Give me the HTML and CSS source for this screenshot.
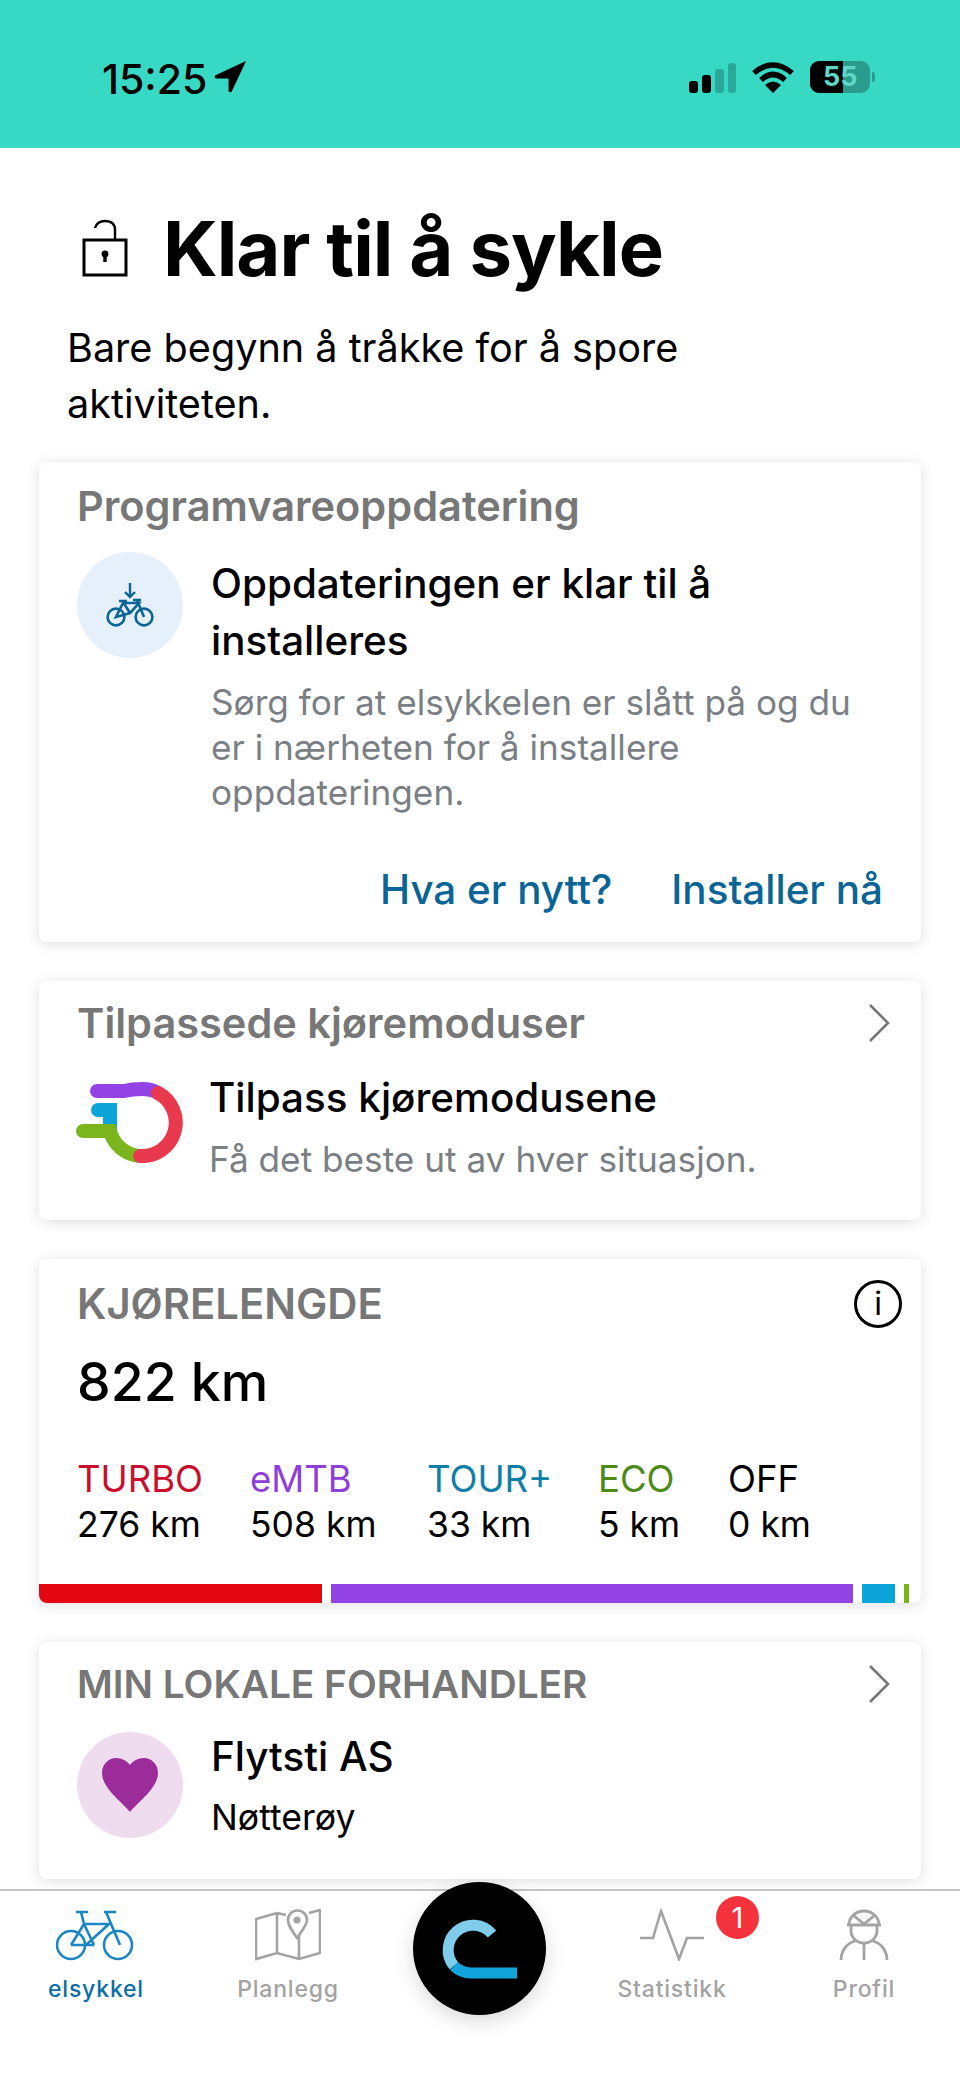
FILE: index.html
```html
<!DOCTYPE html>
<html lang="en">
<head>
  <meta charset="UTF-8">
  <meta name="viewport" content="width=device-width, initial-scale=1.0">
  <title>Klar til å sykle</title>
  <link rel="stylesheet" href="styles.css">
</head>
<body>
  <div class="app">
    <!-- Status bar -->
    <header class="status-bar">
      <div class="status-left">
        <span class="clock">15:25</span>
        <svg class="loc-arrow" viewBox="0 0 34 34"><path d="M33 1 L1 16 Q0 18 2 19 L15 19 L15 32 Q16 34 18 33 Z" fill="#000"/></svg>
      </div>
      <div class="status-right">
        <svg class="signal" viewBox="0 0 47 30">
          <rect x="0" y="18" width="9" height="12" rx="3" fill="#000"/>
          <rect x="13" y="12" width="9" height="18" rx="3" fill="#000"/>
          <rect x="26" y="6" width="9" height="24" rx="3" fill="#000" opacity=".22"/>
          <rect x="39" y="0" width="8" height="30" rx="3" fill="#000" opacity=".22"/>
        </svg>
        <svg class="wifi" viewBox="0 0 42 31">
          <path d="M2 11 Q21 -5 40 11" fill="none" stroke="#000" stroke-width="5.5"/>
          <path d="M9 18 Q21 7 33 18" fill="none" stroke="#000" stroke-width="5.5"/>
          <path d="M13 23 Q21 16 29 23 L21 31 Z" fill="#000"/>
        </svg>
        <div class="battery">
          <div class="battery-body">
            <span class="battery-level"></span>
            <span class="battery-num">55</span>
          </div>
          <span class="battery-nub"></span>
        </div>
      </div>
    </header>

    <main class="content">
      <div class="title-row">
        <svg class="lock" viewBox="0 0 46 58">
          <path d="M33 21 V11 Q33 2 23 2 Q15 2 13 9" fill="none" stroke="#000" stroke-width="2.4"/>
          <rect x="2" y="21" width="42" height="35" fill="none" stroke="#000" stroke-width="3"/>
          <circle cx="23" cy="35" r="3.4" fill="#000"/>
          <rect x="21.3" y="35" width="3.4" height="8" fill="#000"/>
        </svg>
        <h1>Klar til å sykle</h1>
      </div>
      <p class="intro">Bare begynn å tråkke for å spore aktiviteten.</p>

      <!-- Software update -->
      <section class="card card-update">
        <h2 class="card-label">Programvareoppdatering</h2>
        <div class="media">
          <div class="round round-blue">
            <svg class="bike-small" viewBox="0 0 48 46">
              <path d="M24 1 V14 M19 10 L24 15 L29 10" fill="none" stroke="#0a6496" stroke-width="2.4"/>
              <circle cx="10" cy="35" r="8.4" fill="none" stroke="#0a6496" stroke-width="2.6"/>
              <circle cx="38" cy="35" r="8.4" fill="none" stroke="#0a6496" stroke-width="2.6"/>
              <path d="M10 35 L24 31 L33 21 L17 21 Z M38 35 L31 18 M13 19 H21 M27 18 H35 M17 20 L24 31" fill="none" stroke="#0a6496" stroke-width="2.6"/>
            </svg>
          </div>
          <div class="media-text update-text">
            <h3 class="media-title">Oppdateringen er klar til å installeres</h3>
            <p class="media-desc">Sørg for at elsykkelen er slått på og du er i nærheten for å installere oppdateringen.</p>
          </div>
        </div>
        <div class="actions">
          <a class="link">Hva er nytt?</a>
          <a class="link">Installer nå</a>
        </div>
      </section>

      <!-- Custom modes -->
      <section class="card card-modes">
        <div class="card-head">
          <h2 class="card-label">Tilpassede kjøremoduser</h2>
          <svg class="chevron" viewBox="0 0 22 40"><path d="M2 2 L20 20 L2 38" fill="none" stroke="#777" stroke-width="2.6"/></svg>
        </div>
        <div class="media media-center">
          <svg class="modes-logo" viewBox="0 0 110 84">
            <path d="M24 31 H36 V52" fill="none" stroke="#0ca5d9" stroke-width="14" stroke-linecap="round"/>
            <path d="M9 52 H36 A33.5 33.5 0 0 0 66 77" fill="none" stroke="#7ab51d" stroke-width="14" stroke-linecap="round"/>
            <path d="M23 12 H50 Q58 10 68 10 Q78 10 84 14" fill="none" stroke="#9342e6" stroke-width="14" stroke-linecap="round"/>
            <path d="M84 14 A33.5 33.5 0 0 1 66 77" fill="none" stroke="#e8394f" stroke-width="14" stroke-linecap="round"/>
          </svg>
          <div class="media-text">
            <h3 class="media-title">Tilpass kjøremodusene</h3>
            <p class="media-desc">Få det beste ut av hver situasjon.</p>
          </div>
        </div>
      </section>

      <!-- Distance -->
      <section class="card card-range">
        <div class="card-head">
          <h2 class="card-label label-range">KJØRELENGDE</h2>
          <span class="info">i</span>
        </div>
        <div class="total">822 km</div>
        <div class="modes">
          <div class="mode mode-turbo"><span class="mode-name">TURBO</span><span>276 km</span></div>
          <div class="mode mode-emtb"><span class="mode-name">eMTB</span><span>508 km</span></div>
          <div class="mode mode-tour"><span class="mode-name">TOUR+</span><span>33 km</span></div>
          <div class="mode mode-eco"><span class="mode-name">ECO</span><span>5 km</span></div>
          <div class="mode mode-off"><span class="mode-name">OFF</span><span>0 km</span></div>
        </div>
        <div class="bar">
          <span class="bar-turbo"></span>
          <span class="bar-emtb"></span>
          <span class="bar-tour"></span>
          <span class="bar-eco"></span>
        </div>
      </section>

      <!-- Dealer -->
      <section class="card card-dealer">
        <div class="card-head">
          <h2 class="card-label label-dealer">MIN LOKALE FORHANDLER</h2>
          <svg class="chevron" viewBox="0 0 22 40"><path d="M2 2 L20 20 L2 38" fill="none" stroke="#777" stroke-width="2.6"/></svg>
        </div>
        <div class="media media-dealer">
          <div class="round round-pink">
            <svg class="heart" viewBox="0 0 56 54"><path d="M28 54 C20 44 0 30 0 15 C0 6 7 0 14 0 C20 0 25 3 28 7 C31 3 36 0 42 0 C49 0 56 6 56 15 C56 30 36 44 28 54 Z" fill="#9b2c99"/></svg>
          </div>
          <div class="media-text">
            <h3 class="media-title">Flytsti AS</h3>
            <p class="dealer-place">Nøtterøy</p>
          </div>
        </div>
      </section>
    </main>

    <!-- Tab bar -->
    <nav class="tabs">
      <div class="tab tab-active">
        <svg class="tab-icon" viewBox="0 0 80 52">
          <circle cx="15" cy="36" r="14" fill="none" stroke="#1a86c4" stroke-width="2.6"/>
          <circle cx="62" cy="36" r="14" fill="none" stroke="#1a86c4" stroke-width="2.6"/>
          <path d="M15 36 H30 L53 15 H28 L15 36 M28 15 L38 36 M28 15 L25 3 M20 3 H32 M48 3 H60 M50 3 L64 36 M30 36 L38 36" fill="none" stroke="#1a86c4" stroke-width="2.6"/>
        </svg>
        <span class="tab-label">elsykkel</span>
      </div>
      <div class="tab">
        <svg class="tab-icon" viewBox="0 0 66 52">
          <path d="M22 4 L1 10 V50 L22 44 L44 50 L65 44 V1 L54 4 M22 4 L31 6 M22 4 V44 M44 26 V50" fill="none" stroke="#a3a3a3" stroke-width="2.6"/>
          <path d="M42 29 C36 20 33 16 33 11 A9.5 9.5 0 0 1 52 11 C52 16 48 20 42 29 Z" fill="none" stroke="#a3a3a3" stroke-width="2.6"/>
          <circle cx="42" cy="11" r="3.5" fill="#a3a3a3"/>
        </svg>
        <span class="tab-label">Planlegg</span>
      </div>
      <div class="tab tab-middle">
        <div class="center-btn">
          <svg viewBox="0 0 133 133">
            <path d="M79 52 A24.5 24.5 0 1 0 41 84" fill="none" stroke="#7fcdeb" stroke-width="11"/>
            <path d="M41 84 A24.5 24.5 0 0 0 58 91 H104" fill="none" stroke="#12a5dc" stroke-width="11"/>
          </svg>
        </div>
      </div>
      <div class="tab tab-stats">
        <svg class="tab-icon" viewBox="0 0 66 52">
          <path d="M1 29 H14 L22 2 L40 50 L48 29 H65" fill="none" stroke="#a3a3a3" stroke-width="2.6"/>
        </svg>
        <span class="tab-label">Statistikk</span>
        <span class="badge">1</span>
      </div>
      <div class="tab">
        <svg class="tab-icon" viewBox="0 0 50 52">
          <path d="M10 16 A15 14 0 0 1 40 16 M8 16 H42 M14 6 L25 15 L36 6 M12 16 V22 A13 12 0 0 0 38 22 V16" fill="none" stroke="#a3a3a3" stroke-width="2.8"/>
          <path d="M2 51 C2 42 8 34 16 32 M48 51 C48 42 42 34 34 32 M25 34 V51" fill="none" stroke="#a3a3a3" stroke-width="2.8"/>
        </svg>
        <span class="tab-label">Profil</span>
      </div>
    </nav>
  </div>
</body>
</html>
```

FILE: styles.css
```css
* {
  box-sizing: border-box;
}
body {
  margin: 0;
  font-family: Inter, "Liberation Sans", sans-serif;
  background-color: #fff;
  color: #000;
}
h1, h2, h3, p {
  margin: 0;
  font-weight: normal;
}
.app {
  width: 960px;
  height: 2087px;
  display: flex;
  flex-direction: column;
  overflow: hidden;
}

/* Status bar */
.status-bar {
  height: 148px;
  flex: none;
  background-color: #37d8c4;
  display: flex;
  justify-content: space-between;
  padding: 60px 85px 0 102px;
}
.status-left {
  display: flex;
  align-items: flex-start;
  gap: 7px;
}
.clock {
  font-size: 41px;
  line-height: 38px;
  font-weight: 500;
}
.loc-arrow {
  width: 33px;
  height: 33px;
}
.status-right {
  display: flex;
  align-items: flex-start;
  gap: 16px;
}
.signal {
  width: 47px;
  height: 30px;
  margin-top: 3px;
}
.wifi {
  width: 42px;
  height: 31px;
  margin-top: 2px;
}
.battery {
  display: flex;
  align-items: center;
  gap: 2px;
  margin-top: 1px;
}
.battery-body {
  position: relative;
  width: 60px;
  height: 32px;
  border-radius: 9px;
  background-color: #2a9c8e;
  overflow: hidden;
}
.battery-level {
  display: block;
  width: 33px;
  height: 100%;
  background-color: #000;
}
.battery-num {
  position: absolute;
  top: 0;
  left: 13px;
  font-size: 27px;
  line-height: 32px;
  font-weight: 700;
  color: #5fd8c8;
}
.battery-nub {
  width: 3px;
  height: 10px;
  border-radius: 0 3px 3px 0;
  background-color: #2a9c8e;
}

/* Heading */
.content {
  flex: 1;
  min-height: 0;
  padding: 0 39px;
  overflow: hidden;
}
.title-row {
  display: flex;
  align-items: center;
  gap: 35px;
  margin: 62px 0 0 43px;
  height: 76px;
}
.lock {
  width: 46px;
  height: 58px;
  flex: none;
}
h1 {
  font-size: 76px;
  line-height: 76px;
  font-weight: 700;
  letter-spacing: -1px;
}
.intro {
  margin: 34px 0 0 28px;
  width: 680px;
  font-size: 39.6px;
  line-height: 56px;
}

/* Cards */
.card {
  background-color: #fff;
  border-radius: 8px;
  box-shadow: 0 2px 14px rgba(0, 0, 0, 0.13);
  padding: 0 38px;
  margin-bottom: 39px;
}
.card-update {
  height: 480px;
  margin-top: 30px;
  padding-top: 18px;
}
.card-modes {
  height: 239px;
  padding-top: 16px;
}
.card-range {
  height: 344px;
  padding-top: 19px;
  position: relative;
  overflow: hidden;
}
.card-dealer {
  height: 237px;
  padding-top: 16px;
}
.card-label {
  font-size: 41.5px;
  line-height: 52px;
  font-weight: 600;
  color: #777;
}
.label-range {
  font-size: 41.8px;
}
.label-dealer {
  font-size: 38.8px;
}
.card-head {
  display: flex;
  justify-content: space-between;
  align-items: center;
}
.chevron {
  width: 22px;
  height: 40px;
  margin-right: -7px;
}
.media {
  display: flex;
  gap: 29px;
  margin-top: 20px;
}
.media-center {
  margin-top: 20px;
  align-items: flex-start;
  gap: 29px;
}
.media-dealer {
  margin-top: 22px;
}
.round {
  width: 106px;
  height: 106px;
  border-radius: 50%;
  flex: none;
  display: flex;
  align-items: center;
  justify-content: center;
}
.round-blue {
  background-color: #e6f0fb;
}
.round-pink {
  background-color: #f0dcef;
}
.media-text {
  margin-left: -1px;
}
.update-text {
  padding-top: 3px;
}
.bike-small {
  width: 48px;
  height: 46px;
}
.heart {
  width: 56px;
  height: 54px;
}
.modes-logo {
  width: 110px;
  height: 84px;
  flex: none;
  margin: 10px -3px 0 -3px;
}
.media-title {
  font-size: 40.4px;
  line-height: 57px;
  font-weight: 500;
}
.media-desc {
  font-size: 35.2px;
  line-height: 45px;
  color: #7a7f85;
  margin-top: 11px;
}
.card-dealer .media-title {
  margin-top: -4px;
}
.dealer-place {
  font-size: 35.6px;
  line-height: 45px;
  margin-top: 10px;
}
.actions {
  display: flex;
  justify-content: flex-end;
  gap: 59px;
  margin-top: 49px;
}
.link {
  font-size: 40.4px;
  line-height: 52px;
  font-weight: 500;
  color: #0a6496;
}

/* Distance card */
.info {
  width: 48px;
  height: 48px;
  border: 3px solid #000;
  border-radius: 50%;
  margin-right: -19px;
  font-size: 32px;
  line-height: 42px;
  text-align: center;
}
.total {
  font-size: 53.5px;
  line-height: 64px;
  font-weight: 500;
  margin-top: 20px;
}
.modes {
  display: flex;
  margin-top: 43px;
  font-size: 35.5px;
  line-height: 45px;
}
.mode {
  display: flex;
  flex-direction: column;
}
.mode-name {
  font-size: 36.5px;
}
.mode-turbo { width: 173px; }
.mode-emtb { width: 177px; }
.mode-tour { width: 171px; }
.mode-eco { width: 130px; }
.mode-turbo .mode-name { color: #c8102e; }
.mode-emtb .mode-name { color: #8e3fd9; }
.mode-tour .mode-name { color: #0f7fa8; }
.mode-eco .mode-name { color: #4e8a1a; }
.bar {
  position: absolute;
  left: 0;
  right: 0;
  bottom: 0;
  height: 19px;
  display: flex;
  gap: 9px;
}
.bar-turbo { width: 283px; background-color: #e30613; }
.bar-emtb { width: 522px; background-color: #9342e6; }
.bar-tour { width: 33px; background-color: #0ca5d9; }
.bar-eco { width: 5px; background-color: #7ab51d; }

/* Tab bar */
.tabs {
  height: 198px;
  flex: none;
  border-top: 2px solid #c4c4c4;
  background-color: #fff;
  display: grid;
  grid-template-columns: repeat(5, 192px);
  position: relative;
  padding-top: 18px;
}
.tab {
  position: relative;
  display: flex;
  flex-direction: column;
  align-items: center;
}
.tab-icon {
  height: 52px;
}
.tab-label {
  margin-top: 14px;
  font-size: 23px;
  line-height: 28px;
  font-weight: 500;
  letter-spacing: 0.8px;
  color: #a3a3a3;
}
.tab-active .tab-label {
  color: #0a6ea6;
}
.center-btn {
  position: absolute;
  top: -27px;
  left: 29px;
  width: 133px;
  height: 133px;
  border-radius: 50%;
  background-color: #000;
  box-shadow: 0 6px 20px rgba(0, 0, 0, 0.15);
}
.center-btn svg {
  display: block;
}
.badge {
  position: absolute;
  top: -13px;
  left: 140px;
  width: 43px;
  height: 43px;
  border-radius: 50%;
  background-color: #f5333f;
  color: #fff;
  font-size: 29px;
  line-height: 43px;
  text-align: center;
}
```
